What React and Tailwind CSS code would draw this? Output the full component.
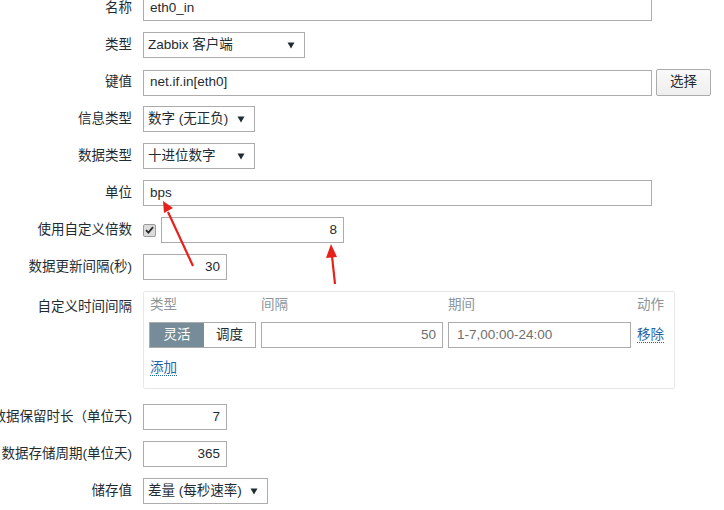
import React from "react";

const font = { fontFamily: '"Liberation Sans", "Noto Sans CJK SC", Arial, sans-serif' };

function Label({ children, top = false }) {
  return (
    <div className={`w-[132px] shrink-0 flex justify-end ${top ? "self-start pt-[6px]" : ""}`}>
      <span className="shrink-0 whitespace-nowrap text-[13.5px] text-[#1f2c33]">{children}</span>
    </div>
  );
}

function Row({ label, children, className = "", top = false }) {
  return (
    <div className={`flex items-center ${className}`}>
      <Label top={top}>{label}</Label>
      <div className="ml-[11px] flex items-center">{children}</div>
    </div>
  );
}

function Arrow() {
  return (
    <svg width="8" height="7" viewBox="0 0 8 7" className="shrink-0">
      <path d="M0.5 0.5 L7.5 0.5 L4 6.5 Z" fill="#1f2c33" />
    </svg>
  );
}

function Select({ width, children }) {
  return (
    <div
      className="h-[26px] border border-[#acacac] bg-white flex items-center justify-between pl-[4px] pr-[9px] text-[13.5px] text-[#1f2c33]"
      style={{ width }}
    >
      <span className="whitespace-nowrap">{children}</span>
      <Arrow />
    </div>
  );
}

function Input({ width, children, right = false, color = "text-[#1f2c33]" }) {
  return (
    <div
      className={`h-[26px] border border-[#acacac] bg-white flex items-center text-[13.5px] ${color} ${
        right ? "justify-end pr-[6px]" : "pl-[6px]"
      }`}
      style={{ width }}
    >
      {children}
    </div>
  );
}

export default function App() {
  return (
    <div className="relative w-[724px] h-[510px] overflow-hidden bg-white" style={font}>
      <div className="flex flex-col">
        <Row label="名称" className="-mt-[5px]">
          <Input width={509}>eth0_in</Input>
        </Row>
        <Row label="类型" className="mt-[11px]">
          <Select width={162}>Zabbix 客户端</Select>
        </Row>
        <Row label="键值" className="mt-[11px]">
          <Input width={509}>net.if.in[eth0]</Input>
          <button className="ml-[4px] h-[27px] w-[55px] border border-[#acacac] rounded-[2px] bg-gradient-to-b from-[#fafafa] to-[#eeeeee] text-[13.5px] text-[#1f2c33]">
            选择
          </button>
        </Row>
        <Row label="信息类型" className="mt-[10px]">
          <Select width={112}>数字 (无正负)</Select>
        </Row>
        <Row label="数据类型" className="mt-[11px]">
          <Select width={112}>十进位数字</Select>
        </Row>
        <Row label="单位" className="mt-[11px]">
          <Input width={509}>bps</Input>
        </Row>
        <Row label="使用自定义倍数" className="mt-[11px]">
          <div className="w-[13px] h-[13px] rounded-[2px] border border-[#9a9a9a] bg-[#dcdcdc] flex items-center justify-center">
            <svg width="9" height="8" viewBox="0 0 9 8">
              <path d="M1 4.2 L3.4 6.6 L8 1.2" stroke="#2a2a2a" strokeWidth="1.8" fill="none" />
            </svg>
          </div>
          <div className="ml-[5px]">
            <Input width={183} right>
              8
            </Input>
          </div>
        </Row>
        <Row label="数据更新间隔(秒)" className="mt-[11px]">
          <Input width={84} right>
            30
          </Input>
        </Row>
        <Row label="自定义时间间隔" className="mt-[11px]" top>
          <div className="w-[532px] border border-[#e6e9eb] rounded-[2px] bg-white pl-[5px] pr-[10px] pt-[4px] pb-[10px]">
            <div className="grid grid-cols-[107px_182px_183px_auto] gap-x-[5px] text-[13.5px]">
              <div className="h-[18px] leading-[18px] pl-[1px] text-[#8c969b]">类型</div>
              <div className="h-[18px] leading-[18px] text-[#8c969b]">间隔</div>
              <div className="h-[18px] leading-[18px] text-[#8c969b]">期间</div>
              <div className="h-[18px] leading-[18px] ml-[1px] text-[#8c969b]">动作</div>

              <div className="mt-[8px] h-[26px] flex border border-[#acacac]">
                <div className="w-[54px] bg-[#768d99] text-white flex items-center justify-center">灵活</div>
                <div className="flex-1 bg-white text-[#1f2c33] flex items-center justify-center">调度</div>
              </div>
              <div className="mt-[8px]">
                <Input width={182} right color="text-[#6e6e6e]">
                  50
                </Input>
              </div>
              <div className="mt-[8px]">
                <div className="h-[26px] w-[183px] border border-[#acacac] flex items-center pl-[8px] text-[13.5px] text-[#6e6e6e]">
                  1-7,00:00-24:00
                </div>
              </div>
              <div className="mt-[8px] ml-[1px] h-[26px] flex items-center">
                <span className="text-[#1f65a6] border-b border-dotted border-[#1f65a6] leading-[15px]">移除</span>
              </div>
            </div>
            <div className="mt-[10px] pl-[1px] text-[13.5px]">
              <span className="text-[#1f65a6] border-b border-dotted border-[#1f65a6] leading-[15px] inline-block">添加</span>
            </div>
          </div>
        </Row>
        <Row label="数据保留时长（单位天)" className="mt-[15px]">
          <Input width={84} right>
            7
          </Input>
        </Row>
        <Row label="数据存储周期(单位天)" className="mt-[11px]">
          <Input width={84} right>
            365
          </Input>
        </Row>
        <Row label="储存值" className="mt-[11px]">
          <Select width={125}>差量 (每秒速率)</Select>
        </Row>
      </div>

      <svg className="absolute left-0 top-0 pointer-events-none" width="724" height="510">
        <line x1="193" y1="266" x2="168" y2="212" stroke="#e8201a" strokeWidth="2.2" />
        <polygon points="163,201 173,208 164,213" fill="#e8201a" />
        <line x1="335" y1="284" x2="332" y2="256" stroke="#e8201a" strokeWidth="2.2" />
        <polygon points="331,244 337,257 326,258" fill="#e8201a" />
      </svg>
    </div>
  );
}
